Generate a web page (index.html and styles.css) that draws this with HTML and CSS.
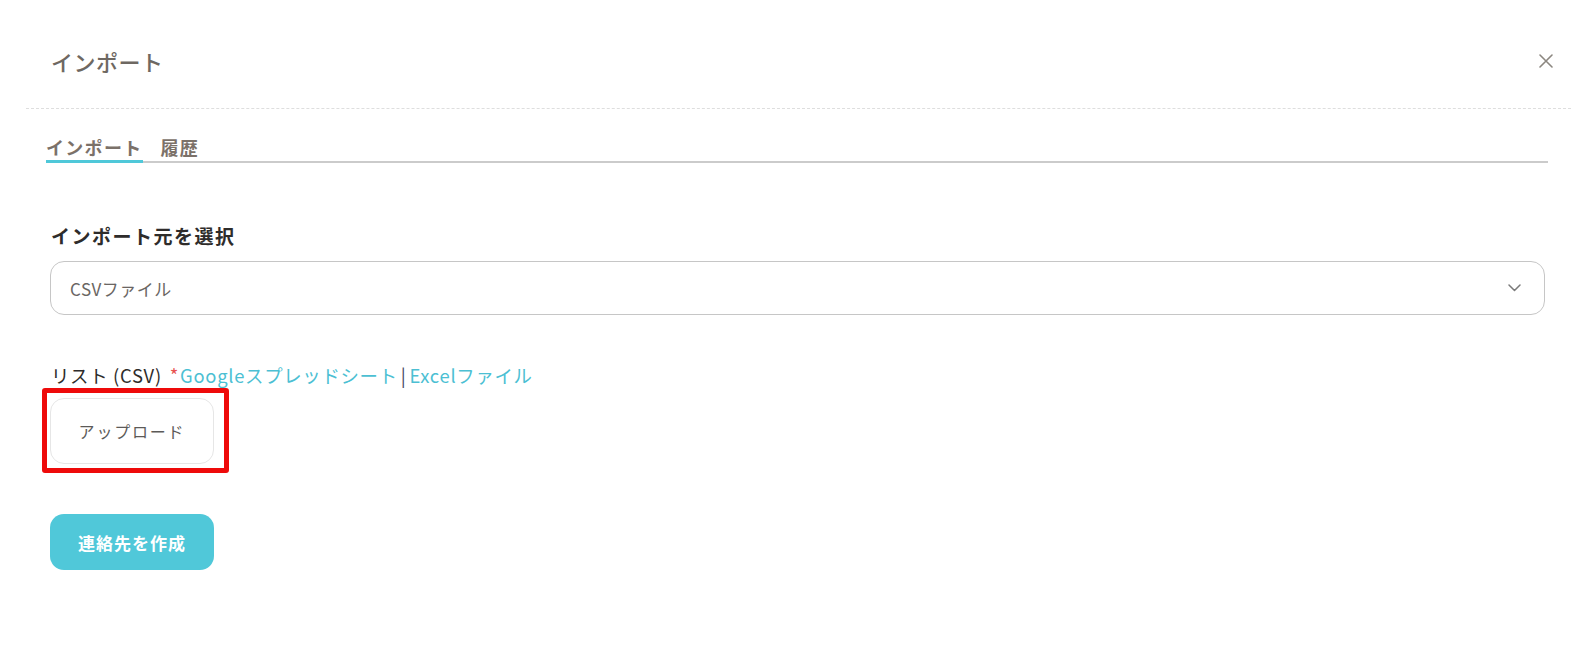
FILE: index.html
```html
<!DOCTYPE html>
<html lang="ja">
<head>
<meta charset="utf-8">
<title>インポート</title>
<link rel="stylesheet" href="styles.css">
</head>
<body>
<div class="modal">
  <header class="header">
    <h1 class="title">インポート</h1>
    <button class="close" aria-label="閉じる">
      <svg width="14" height="14" viewBox="0 0 14 14"><path d="M1 1L13 13M13 1L1 13" stroke="#8c8780" stroke-width="1.6" fill="none" stroke-linecap="round"/></svg>
    </button>
  </header>
  <nav class="tabs">
    <span class="tab active">インポート</span>
    <span class="tab">履歴</span>
  </nav>
  <main class="content">
    <div class="field-label">インポート元を選択</div>
    <div class="select">
      <span class="select-value">CSVファイル</span>
      <svg class="chevron" width="13" height="8" viewBox="0 0 13 8"><path d="M1 1L6.5 6.5L12 1" stroke="#7a7a7a" stroke-width="1.5" fill="none" stroke-linecap="round" stroke-linejoin="round"/></svg>
    </div>
    <div class="list-label">
      <span class="list-text">リスト (CSV)</span>
      <span class="req">*</span><a class="link">Googleスプレッドシート</a><span class="sep">|</span><a class="link">Excelファイル</a>
    </div>
    <div class="upload-wrap">
      <button class="upload">アップロード</button>
      <div class="highlight"></div>
    </div>
    <button class="create">連絡先を作成</button>
  </main>
</div>
</body>
</html>
```

FILE: styles.css
```css
* { box-sizing: border-box; }
html, body { margin: 0; padding: 0; background: #fff; }
body {
  font-family: "Noto Sans CJK JP", "Noto Sans", sans-serif;
  width: 1596px;
  height: 655px;
  overflow: hidden;
}
.header {
  margin: 0 25px 0 26px;
  height: 109px;
  padding: 46px 18px 0 25px;
  display: flex;
  justify-content: space-between;
  align-items: flex-start;
  border-bottom: 1px dashed #dedede;
}
.title {
  margin: 0;
  font-size: 22px;
  line-height: 30px;
  font-weight: 500;
  color: #6e6862;
  letter-spacing: 0.5px;
}
.close {
  border: 0;
  background: none;
  padding: 0;
  margin-top: 8px;
  width: 14px;
  height: 14px;
  display: flex;
}
.tabs {
  margin: 26px 48px 0 46px;
  display: flex;
  gap: 18px;
  border-bottom: 2px solid #cbcbcb;
}
.tab {
  font-size: 18px;
  line-height: 25px;
  font-weight: 700;
  color: #7b7169;
  letter-spacing: 1.3px;
}
.tab.active {
  border-bottom: 3px solid #4fc8d9;
  margin-bottom: -2px;
}
.content {
  margin-left: 50px;
  width: 1495px;
}
.field-label {
  margin-top: 59px;
  font-size: 19px;
  line-height: 28px;
  font-weight: 700;
  color: #2e2c2b;
  letter-spacing: 1.5px;
  padding-left: 1px;
}
.select {
  margin-top: 11px;
  height: 54px;
  border: 1px solid #c6c6c6;
  border-radius: 14px;
  display: flex;
  align-items: center;
  justify-content: space-between;
  padding: 0 23px 0 19px;
}
.select-value {
  font-size: 17px;
  color: #6a6663;
  letter-spacing: 0.5px;
}
.chevron { display: block; }
.list-label {
  margin-top: 47px;
  font-size: 18.4px;
  line-height: 26px;
  padding-left: 1px;
  display: flex;
  align-items: baseline;
  letter-spacing: 0.7px;
}
.list-text { color: #2e2c2b; margin-right: 8px; }
.req { color: #e8534f; margin-right: 1px; }
.link { color: #4cbfd3; }
.sep { color: #44445a; margin: 0 3px; }
.upload-wrap {
  position: relative;
  width: 164px;
  margin-top: 10px;
}
.upload {
  display: block;
  width: 164px;
  height: 66px;
  border: 1px solid #e6e6e6;
  border-radius: 14px;
  background: #fff;
  font-family: inherit;
  font-size: 16px;
  letter-spacing: 1.8px;
  color: #5c5a58;
  padding: 0;
}
.highlight {
  position: absolute;
  left: -8px;
  top: -10px;
  right: -15px;
  bottom: -9px;
  border: 5px solid #ee0a0a;
  border-radius: 3px;
  pointer-events: none;
}
.create {
  display: block;
  margin-top: 50px;
  width: 164px;
  height: 56px;
  border: 0;
  border-radius: 14px;
  background: #50c8d9;
  color: #fff;
  font-family: inherit;
  font-size: 17px;
  font-weight: 700;
  letter-spacing: 1px;
  padding: 0;
}
```
